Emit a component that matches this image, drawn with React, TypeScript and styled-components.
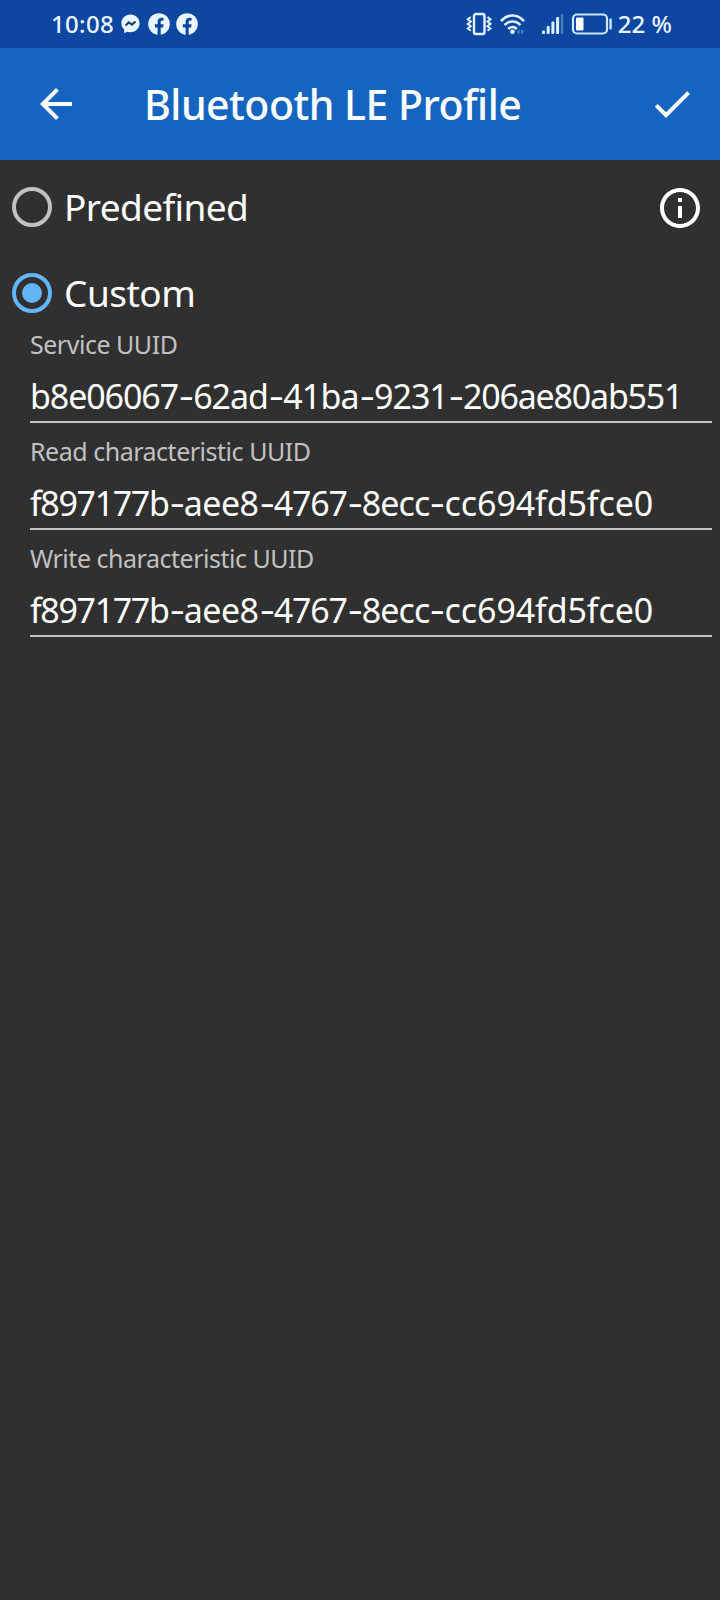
import React from "react";
import styled, { createGlobalStyle } from "styled-components";

const GlobalStyle = createGlobalStyle`
  *, *::before, *::after { box-sizing: border-box; }
  body {
    margin: 0;
    background: #303030;
    color: #fff;
    font-family: "Noto Sans", Roboto, sans-serif;
    font-variant-ligatures: none;
  }
`;

const Screen = styled.div`
  display: flex;
  flex-direction: column;
  width: 720px;
  min-height: 1600px;
  background: #303030;
`;

const StatusBar = styled.header`
  display: flex;
  align-items: center;
  justify-content: space-between;
  height: 48px;
  padding: 0 48px 0 51px;
  background: #0d47a1;
  color: #e9f5ff;
`;

const StatusGroup = styled.div`
  display: flex;
  align-items: center;
`;

const StatusText = styled.span<{ $spacing?: number }>`
  font-size: 24px;
  font-weight: 500;
  line-height: 48px;
  letter-spacing: ${(p) => p.$spacing ?? 0}px;
  white-space: pre;
`;

const StatusIcon = styled.svg<{ $gap: number }>`
  display: block;
  flex: none;
  margin-left: ${(p) => p.$gap}px;
`;

const AppBar = styled.div`
  display: flex;
  align-items: center;
  height: 112px;
  padding: 0 24px 0 32px;
  background: #1565c0;
`;

const IconButton = styled.button`
  display: block;
  flex: none;
  width: 48px;
  height: 48px;
  padding: 0;
  border: 0;
  background: none;
  color: #fff;
`;

const InfoButton = styled(IconButton)`
  margin-top: 2px;
`;

const Title = styled.h1`
  flex: 1;
  margin: 0 0 0 64px;
  font-size: 41px;
  font-weight: 500;
  line-height: 56px;
  letter-spacing: -0.5px;
`;

const Content = styled.main`
  display: flex;
  flex-direction: column;
  padding: 4px 8px 0;
`;

const OptionRow = styled.div<{ $height: number }>`
  display: flex;
  align-items: center;
  height: ${(p) => p.$height}px;
  padding: 0 8px 0 0;
`;

const Options = styled.div`
  display: flex;
  flex-direction: column;
  gap: 8px;
`;

const OptionLabel = styled.label<{ $spacing: number }>`
  flex: 1;
  margin-left: 8px;
  font-size: 37px;
  line-height: 50px;
  letter-spacing: ${(p) => p.$spacing}px;
`;

const RadioIcon = styled.svg<{ $checked?: boolean }>`
  flex: none;
  color: ${(p) => (p.$checked ? "#64b5f6" : "#c1c1c1")};
`;

const Fields = styled.div`
  display: flex;
  flex-direction: column;
  gap: 12px;
  padding-left: 22px;
`;

const Field = styled.div`
  display: flex;
  flex-direction: column;
`;

const FieldLabel = styled.span`
  font-size: 25px;
  line-height: 32px;
  letter-spacing: -0.48px;
  color: #c1c1c1;
`;

const FieldValue = styled.div`
  height: 63px;
  padding-top: 10px;
  border-bottom: 2px solid #c3c1c3;
  font-size: 34px;
  line-height: 52px;
  white-space: nowrap;
`;

const UuidGroup = styled.span<{ $spacing: number }>`
  letter-spacing: ${(p) => p.$spacing}px;
`;

const Dash = styled.span`
  display: inline-block;
  padding: 0 1.5px 0 2.7px;
  transform: translateY(-1px) scaleX(1.35);
`;

function Uuid({ value, spacing }: { value: string; spacing: number[] }) {
  return (
    <>
      {value.split("-").map((part, i) => (
        <React.Fragment key={i}>
          {i > 0 && <Dash>-</Dash>}
          <UuidGroup $spacing={spacing[i]}>{part}</UuidGroup>
        </React.Fragment>
      ))}
    </>
  );
}

function Radio({ checked }: { checked?: boolean }) {
  return (
    <RadioIcon $checked={checked} width="48" height="48" viewBox="0 0 24 24">
      <circle cx="12" cy="12" r="9" fill="none" stroke="currentColor" strokeWidth="2" />
      {checked && <circle cx="12" cy="12" r="5" fill="currentColor" />}
    </RadioIcon>
  );
}

function Facebook({ gap }: { gap: number }) {
  return (
    <StatusIcon $gap={gap} width="22" height="22" viewBox="0 0 22 22">
      <circle cx="11" cy="11" r="10.8" fill="#e9f5ff" />
      <path
        d="M9.600 22v-7.600H6.900v-3.200h2.700V9c0-2.800 1.600-4.200 4-4.200 1 0 2 .2 2 .2v2.600h-1.300c-1.200 0-1.600.8-1.600 1.600v2h2.900l-.5 3.200h-2.400V22z"
        fill="#0d47a1"
      />
    </StatusIcon>
  );
}

const fields = [
  {
    label: "Service UUID",
    value: "b8e06067-62ad-41ba-9231-206ae80ab551",
    spacing: [-1.1, -1.0, -0.8, -1.0, -1.2],
  },
  {
    label: "Read characteristic UUID",
    value: "f897177b-aee8-4767-8ecc-cc694fd5fce0",
    spacing: [-1.35, -0.5, -1.2, -0.9, -0.1],
  },
  {
    label: "Write characteristic UUID",
    value: "f897177b-aee8-4767-8ecc-cc694fd5fce0",
    spacing: [-1.35, -0.5, -1.2, -0.9, -0.1],
  },
];

export default function App() {
  return (
    <Screen>
      <GlobalStyle />
      <StatusBar>
        <StatusGroup>
          <StatusText $spacing={0.3}>10:08</StatusText>
          <StatusIcon $gap={7} width="19" height="20" viewBox="0 0 19 20">
            <path
              d="M9.500.5C4.300.5.400 4.200.400 9.300c0 2.600 1.100 4.700 2.800 6.200v3.700l2.900-1.500c1 .3 2.200.5 3.400.5 5.200 0 9.100-3.800 9.100-8.900S14.700.5 9.500.5z"
              fill="#e9f5ff"
            />
            <path d="M4.500 11.600l3.200-3.300 3.300 2.300 3.500-3.200" fill="none" stroke="#173a6e" strokeWidth="2" />
          </StatusIcon>
          <Facebook gap={8} />
          <Facebook gap={6} />
        </StatusGroup>
        <StatusGroup>
          <StatusIcon $gap={0} width="26" height="24" viewBox="0 0 26 24" fill="none" stroke="#e0f2ff" strokeWidth="2.400">
            <rect x="8" y="2" width="10.500" height="20" rx="2" />
            <path
              d="M4.800 5l-3 2.300 3 2.300-3 2.300 3 2.300-3 2.300 3 2.300M21.500 5l3 2.300-3 2.300 3 2.300-3 2.300 3 2.300-3 2.300"
              strokeWidth="2"
            />
          </StatusIcon>
          <StatusIcon $gap={8} width="25" height="22" viewBox="0 0 25 22" fill="none" stroke="#e0f2ff" strokeWidth="2.600">
            <path d="M1 8.200C7.500.5 17.500.5 24 8.200M4.600 12.200c4.500-5 11.300-5 15.800 0M8.200 16c2.500-2.600 6.100-2.600 8.600 0" />
            <circle cx="12.500" cy="18.800" r="2.300" fill="#e0f2ff" stroke="none" />
            <path d="M19.500 16l-2.800 2.800 2.800 2.800zM21.200 16l2.800 2.800-2.800 2.800z" fill="#4f83cc" stroke="none" />
          </StatusIcon>
          <StatusIcon $gap={16} width="23" height="22" viewBox="0 0 23 22" fill="#e0f2ff">
            <rect x="1" y="17.500" width="3" height="3.500" rx="1" />
            <rect x="5.700" y="13" width="3" height="8" rx="1" />
            <rect x="10.400" y="8.500" width="3" height="12.500" rx="1" />
            <rect x="15.100" y="4" width="3" height="17" rx="1" />
            <rect x="19.800" y="1" width="2.400" height="20" rx="1" opacity=".3" />
          </StatusIcon>
          <StatusIcon $gap={7} width="41" height="22" viewBox="0 0 41 22">
            <rect x="2" y="1.500" width="34" height="19" rx="4" fill="none" stroke="#cfe8ff" strokeWidth="2.200" />
            <rect x="5" y="4.500" width="7.500" height="13" rx="1" fill="#fff" />
            <rect x="38.400" y="5.500" width="2.400" height="11" rx="1" fill="#cfe8ff" />
          </StatusIcon>
          <StatusText>{" 22 %"}</StatusText>
        </StatusGroup>
      </StatusBar>

      <AppBar>
        <IconButton aria-label="Back">
          <svg width="48" height="48" viewBox="0 0 24 24" fill="currentColor">
            <path d="M20 11H7.830l5.590-5.590L12 4l-8 8 8 8 1.410-1.410L7.830 13H20v-2z" />
          </svg>
        </IconButton>
        <Title>Bluetooth LE Profile</Title>
        <IconButton aria-label="Save">
          <svg width="48" height="48" viewBox="0 0 24 24" fill="currentColor">
            <path d="M9 16.170L4.830 12l-1.420 1.410L9 19 21 7l-1.410-1.410z" />
          </svg>
        </IconButton>
      </AppBar>

      <Content>
        <Options>
          <OptionRow $height={86}>
            <Radio />
            <OptionLabel $spacing={-0.6}>Predefined</OptionLabel>
            <InfoButton aria-label="Information">
              <svg width="48" height="48" viewBox="0 0 24 24" fill="currentColor">
                <path d="M11 7h2v2h-2zm0 4h2v6h-2zm1-9C6.480 2 2 6.480 2 12s4.480 10 10 10 10-4.480 10-10S17.520 2 12 2zm0 18c-4.410 0-8-3.590-8-8s3.590-8 8-8 8 3.590 8 8-3.590 8-8 8z" />
              </svg>
            </InfoButton>
          </OptionRow>
          <OptionRow $height={70}>
            <Radio checked />
            <OptionLabel $spacing={-0.5}>Custom</OptionLabel>
          </OptionRow>
        </Options>
        <Fields>
          {fields.map((f) => (
            <Field key={f.label}>
              <FieldLabel>{f.label}</FieldLabel>
              <FieldValue>
                <Uuid value={f.value} spacing={f.spacing} />
              </FieldValue>
            </Field>
          ))}
        </Fields>
      </Content>
    </Screen>
  );
}
